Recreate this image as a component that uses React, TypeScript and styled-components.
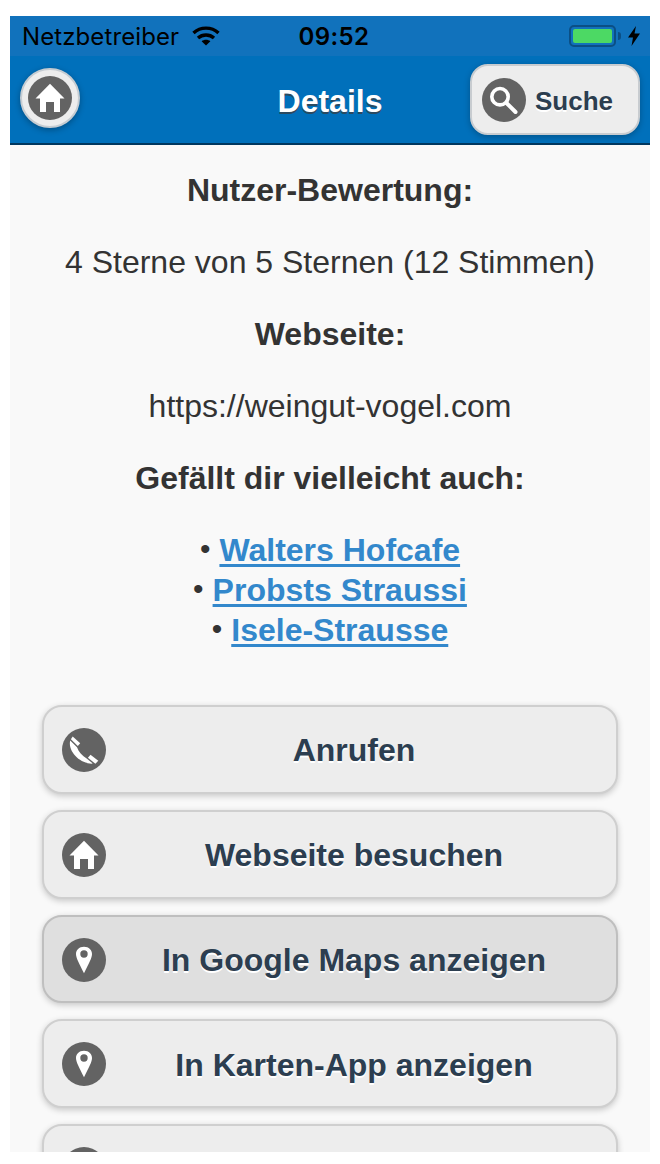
import React from 'react'
import styled, { createGlobalStyle } from 'styled-components'

const GlobalStyle = createGlobalStyle`
  html, body {
    margin: 0;
    padding: 0;
    background: #fff;
  }
  body {
    font-family: "Liberation Sans", Arial, sans-serif;
  }
`

const Screen = styled.div`
  width: 640px;
  height: 1136px;
  margin: 16px 10px 12px;
  overflow: hidden;
  background: #f9f9f9;
`

const StatusBar = styled.div`
  height: 40px;
  padding: 0 10px 0 12px;
  display: grid;
  grid-template-columns: 1fr auto 1fr;
  align-items: center;
  background: #1172bc;
  color: #000;
  font-family: "Inter", "Liberation Sans", sans-serif;
  font-size: 24px;
`

const Carrier = styled.div`
  display: flex;
  align-items: center;
  gap: 13px;
  font-size: 24px;
  font-weight: 400;
  letter-spacing: 0.1px;
`

const Clock = styled.div`
  margin-left: 6px;
  font-weight: 600;
  font-size: 24px;
  letter-spacing: 0.4px;
`

const Power = styled.div`
  display: flex;
  align-items: center;
  justify-content: flex-end;
  gap: 12px;
`

const Battery = styled.div`
  position: relative;
  width: 47px;
  height: 22px;
  box-sizing: border-box;
  padding: 2px;
  border: 2px solid #0b4f85;
  border-radius: 5px;

  &::after {
    content: '';
    position: absolute;
    right: -7px;
    top: 5px;
    width: 3px;
    height: 8px;
    border-radius: 0 3px 3px 0;
    background: #0b4f85;
  }
`

const BatteryFill = styled.div`
  height: 100%;
  border-radius: 2px;
  background: #4cd964;
`

const Header = styled.header`
  height: 87px;
  box-sizing: content-box;
  padding: 0 10px;
  display: grid;
  grid-template-columns: 1fr auto 1fr;
  align-items: center;
  background: #0070bb;
  border-bottom: 2px solid #00375f;
`

const HomeButton = styled.button`
  width: 60px;
  height: 60px;
  margin-bottom: 3px;
  padding: 0;
  display: flex;
  align-items: center;
  justify-content: center;
  border: 2px solid #c5ccd2;
  border-radius: 50%;
  background: #ededed;
  box-shadow: 0 2px 6px rgba(0, 0, 0, 0.3);
`

const Title = styled.h1`
  margin: 4px 0 0;
  color: #fff;
  font-size: 32px;
  font-weight: 700;
  text-shadow: 0 2px 0 #2b4a60;
`

const SearchButton = styled.button`
  justify-self: end;
  width: 170px;
  height: 71px;
  padding: 0 0 0 10px;
  display: flex;
  align-items: center;
  gap: 9px;
  border: 2px solid #c8ccd0;
  border-radius: 18px;
  background: #ededed;
  color: #2c3e50;
  font: 700 26px "Liberation Sans", Arial, sans-serif;
  text-shadow: 0 2px 0 #fff;
  box-shadow: 0 2px 6px rgba(0, 0, 0, 0.25);
`

const SearchLabel = styled.span`
  padding-top: 4px;
`

const IconDisc = styled.span`
  flex: none;
  width: 44px;
  height: 44px;
  display: flex;
  align-items: center;
  justify-content: center;
  border-radius: 50%;
  background: #636363;
`

const Content = styled.main`
  padding: 25px 20px 0;
  text-align: center;
  color: #333;
  font-size: 32px;
  line-height: 40px;
`

const Paragraph = styled.p`
  margin: 0 0 32px;
`

const Heading = styled(Paragraph)`
  font-weight: 700;
`

const LinkList = styled.div`
  margin-bottom: 55px;
`

const Dot = styled.span`
  position: relative;
  top: -2px;
  font-size: 30px;
  line-height: 1;
  margin-right: 9px;
`

const Suggestion = styled.a`
  color: #3388cc;
  font-weight: 700;
  text-decoration: underline;
  text-underline-offset: 3px;
`

const Actions = styled.div`
  display: flex;
  flex-direction: column;
  gap: 16px;
  margin: 0 12px;
`

const ActionButton = styled.button<{ $active?: boolean }>`
  position: relative;
  height: 88.75px;
  flex: none;
  width: 100%;
  padding: 0;
  border: 2px solid ${p => (p.$active ? '#bfbfbf' : '#cfcfcf')};
  border-radius: 20px;
  background: ${p => (p.$active ? '#dfdfdf' : '#ededed')};
  color: #2c3e50;
  font: 700 32px "Liberation Sans", Arial, sans-serif;
  text-shadow: 0 2px 0 #fff;
  box-shadow: 0 2px 6px rgba(0, 0, 0, 0.2);
`

const ActionIcon = styled(IconDisc)`
  position: absolute;
  left: 18px;
  top: 21px;
`

const ActionLabel = styled.span`
  display: block;
  padding: 2.8px 0 0 48px;
`

function HomeIcon() {
  return (
    <svg width="30" height="30" viewBox="0 0 30 30">
      <path d="M15 0.7 L29.5 15.5 H25 V29 H19 V19 H11 V29 H5 V15.5 H0.5 Z" fill="#fff" />
    </svg>
  )
}

function SearchIcon() {
  return (
    <svg width="32" height="32" viewBox="0 0 32 32" fill="none" stroke="#fff">
      <circle cx="12" cy="12.7" r="8.2" strokeWidth="3.6" />
      <path d="M18.5 19 L27.5 28" strokeWidth="4" strokeLinecap="round" />
    </svg>
  )
}

function PhoneIcon() {
  return (
    <svg width="30" height="30" viewBox="0 0 30 30" fill="#fff">
      <path d="M1.2 5.6 L8 12.2 C9.5 17 13 20.5 18 23.8 L23.8 28.6 C12 29.5 -1.5 17 1.2 5.6 Z" />
      <path d="M3.7 1.5 L11.2 8.3 L8.8 11 L1.9 4.2 Z" />
      <path d="M21.5 19.8 L29.3 25.7 L26.4 28.8 L18.9 22.8 Z" />
    </svg>
  )
}

function PinIcon() {
  return (
    <svg width="26" height="36" viewBox="0 0 26 36">
      <path
        fillRule="evenodd"
        fill="#fff"
        d="M13 4.7 C8 4.7 5 8 5 12 C5 16 8 21 13 31.3 C18 21 21 16 21 12 C21 8 18 4.7 13 4.7 Z M13 8.3 A3.7 3.7 0 1 1 13 15.7 A3.7 3.7 0 1 1 13 8.3 Z"
      />
    </svg>
  )
}

function WifiIcon() {
  return (
    <svg width="28" height="20" viewBox="0 0 28 20" fill="none" stroke="#000" strokeWidth="3.4">
      <path d="M1.5 7 C8.5 0.5 19.5 0.5 26.5 7" />
      <path d="M6 12 C10.5 8 17.5 8 22 12" />
      <path d="M14 19.5 L9.6 15.2 C12 13.2 16 13.2 18.4 15.2 Z" fill="#000" stroke="none" />
    </svg>
  )
}

function BoltIcon() {
  return (
    <svg width="12" height="20" viewBox="0 0 12 20">
      <path d="M8 0 L0 11.5 H5 L3.5 20 L12 7.5 H6.5 Z" fill="#000" />
    </svg>
  )
}

const actions = [
  { label: 'Anrufen', icon: <PhoneIcon /> },
  { label: 'Webseite besuchen', icon: <HomeIcon /> },
  { label: 'In Google Maps anzeigen', icon: <PinIcon />, active: true },
  { label: 'In Karten-App anzeigen', icon: <PinIcon /> },
  { label: '', icon: <PinIcon /> },
]

const suggestions = ['Walters Hofcafe', 'Probsts Straussi', 'Isele-Strausse']

export default function App() {
  return (
    <>
      <GlobalStyle />
      <Screen>
        <StatusBar>
          <Carrier>
            Netzbetreiber
            <WifiIcon />
          </Carrier>
          <Clock>09:52</Clock>
          <Power>
            <Battery>
              <BatteryFill />
            </Battery>
            <BoltIcon />
          </Power>
        </StatusBar>
        <Header>
          <HomeButton aria-label="Home">
            <IconDisc>
              <HomeIcon />
            </IconDisc>
          </HomeButton>
          <Title>Details</Title>
          <SearchButton>
            <IconDisc>
              <SearchIcon />
            </IconDisc>
            <SearchLabel>Suche</SearchLabel>
          </SearchButton>
        </Header>
        <Content>
          <Heading>Nutzer-Bewertung:</Heading>
          <Paragraph>4 Sterne von 5 Sternen (12 Stimmen)</Paragraph>
          <Heading>Webseite:</Heading>
          <Paragraph>https://weingut-vogel.com</Paragraph>
          <Heading>Gefällt dir vielleicht auch:</Heading>
          <LinkList>
            {suggestions.map(name => (
              <div key={name}>
                <Dot>•</Dot>
                <Suggestion href="#">{name}</Suggestion>
              </div>
            ))}
          </LinkList>
          <Actions>
            {actions.map((action, i) => (
              <ActionButton key={i} $active={action.active}>
                <ActionIcon>{action.icon}</ActionIcon>
                <ActionLabel>{action.label}</ActionLabel>
              </ActionButton>
            ))}
          </Actions>
        </Content>
      </Screen>
    </>
  )
}
